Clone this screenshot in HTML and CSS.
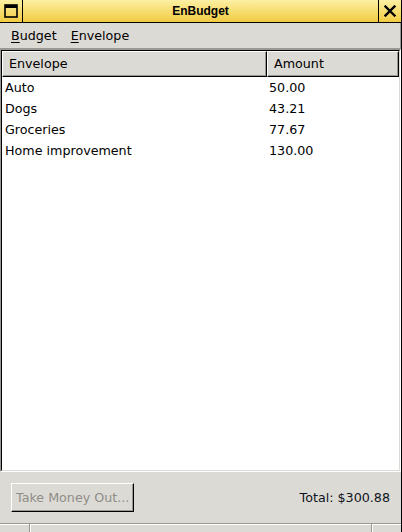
FILE: index.html
```html
<!DOCTYPE html>
<html>
<head>
<meta charset="utf-8">
<title>EnBudget</title>
<link rel="stylesheet" href="styles.css">
</head>
<body>
<div class="window">
  <div class="titlebar">
    <div class="tb-btn tb-left">
      <svg width="14" height="14" viewBox="0 0 14 14"><rect x="1" y="1" width="12" height="12" fill="none" stroke="#000" stroke-width="1.6"/><rect x="1" y="1" width="12" height="3" fill="#000"/></svg>
    </div>
    <div class="title">EnBudget</div>
    <div class="tb-btn tb-right">
      <svg width="12" height="12" viewBox="0 0 12 12"><path d="M1.5 1.5 L10.5 10.5 M10.5 1.5 L1.5 10.5" stroke="#000" stroke-width="2.4" stroke-linecap="square"/></svg>
    </div>
  </div>
  <div class="menubar">
    <span class="menu"><u>B</u>udget</span>
    <span class="menu"><u>E</u>nvelope</span>
  </div>
  <div class="tree-outer">
    <div class="tree-inner">
      <div class="thead">
        <div class="th th1">Envelope</div>
        <div class="th th2">Amount</div>
      </div>
      <div class="tbody">
        <div class="row"><span class="c1">Auto</span><span class="c2">50.00</span></div>
        <div class="row"><span class="c1">Dogs</span><span class="c2">43.21</span></div>
        <div class="row"><span class="c1">Groceries</span><span class="c2">77.67</span></div>
        <div class="row"><span class="c1">Home improvement</span><span class="c2">130.00</span></div>
      </div>
    </div>
  </div>
  <div class="footer">
    <button class="btn" disabled>Take Money Out...</button>
    <span class="total">Total: $300.88</span>
  </div>
  <div class="status">
    <div class="s s1"></div>
    <div class="s s2"></div>
    <div class="s s3"></div>
  </div>
</div>
</body>
</html>
```
FILE: styles.css
```css
html, body {
  margin: 0;
  padding: 0;
  background: #dcdad5;
}
.window {
  width: 402px;
  height: 532px;
  box-sizing: border-box;
  border-right: 1px solid #000;
  display: flex;
  flex-direction: column;
  font-family: "DejaVu Sans", sans-serif;
  font-size: 12.7px;
  color: #000;
  background: #dcdad5;
  overflow: hidden;
}
.titlebar {
  height: 22px;
  border-bottom: 1px solid #000;
  background: linear-gradient(#fdf0a4, #f7dc6c 55%, #f2cb42);
  display: flex;
  align-items: stretch;
  flex: none;
}
.tb-btn {
  width: 22px;
  display: flex;
  align-items: center;
  justify-content: center;
}
.tb-left {
  border-right: 1px solid #000;
}
.tb-right {
  border-left: 1px solid #000;
}
.title {
  flex: 1;
  text-align: center;
  font-family: "Liberation Sans", Arial, sans-serif;
  font-weight: bold;
  font-size: 12px;
  line-height: 22px;
}
.menubar {
  height: 25px;
  border-bottom: 1px solid #9a9893;
  border-right: 1px solid #9a9893;
  padding-left: 4px;
  display: flex;
  align-items: center;
  flex: none;
  background: #dcdad5;
}
.menu {
  padding: 0 7px;
  line-height: 25px;
}
.menu u {
  text-decoration-thickness: 1px;
  text-underline-offset: 2px;
}
.tree-outer {
  flex: 1;
  border-top: 1px solid #9a9893;
  border-left: 1px solid #9a9893;
  border-bottom: 1px solid #fff;
  border-right: 1px solid #fff;
  display: flex;
  min-height: 0;
}
.tree-inner {
  flex: 1;
  border-top: 1px solid #000;
  border-left: 1px solid #000;
  border-bottom: 1px solid #dcdad5;
  border-right: 1px solid #dcdad5;
  background: #fff;
  display: flex;
  flex-direction: column;
}
.thead {
  display: grid;
  grid-template-columns: 265px 1fr;
  height: 26px;
  flex: none;
}
.th {
  background: #dcdad5;
  box-sizing: border-box;
  border-top: 1px solid #fff;
  border-left: 1px solid #fff;
  border-right: 1px solid #000;
  border-bottom: 1px solid #000;
  box-shadow: inset -1px -1px 0 #9a9893;
  line-height: 24px;
  padding-left: 6px;
}
.tbody {
  display: flex;
  flex-direction: column;
}
.row {
  display: grid;
  grid-template-columns: 265px 1fr;
  height: 21px;
  line-height: 21px;
}
.c1 {
  padding-left: 3px;
}
.c2 {
  padding-left: 2px;
}
.footer {
  height: 51px;
  flex: none;
  box-sizing: border-box;
  padding: 10px 11px 11px 11px;
  display: flex;
  align-items: center;
  justify-content: space-between;
}
.btn {
  width: 123px;
  height: 29px;
  box-sizing: border-box;
  background: #dcdad5;
  border-top: 1px solid #fff;
  border-left: 1px solid #fff;
  border-right: 1px solid #000;
  border-bottom: 1px solid #000;
  box-shadow: inset -1px -1px 0 #9a9893;
  font-family: "DejaVu Sans", sans-serif;
  font-size: 12.7px;
  color: #8f8d88;
  padding: 0 0 0 4px;
  text-align: left;
  margin: 0;
}
.total {
  color: #0e1420;
}
.status {
  flex: none;
  height: 9px;
  box-sizing: border-box;
  display: flex;
  border-top: 1px solid #9a9893;
  box-shadow: inset 0 1px 0 #fff;
}
.s {
  height: 100%;
}
.s1 {
  width: 29px;
  border-right: 1px solid #9a9893;
}
.s2 {
  flex: 1;
  border-left: 1px solid #fff;
  border-right: 1px solid #9a9893;
}
.s3 {
  width: 28px;
  border-left: 1px solid #fff;
}
```
